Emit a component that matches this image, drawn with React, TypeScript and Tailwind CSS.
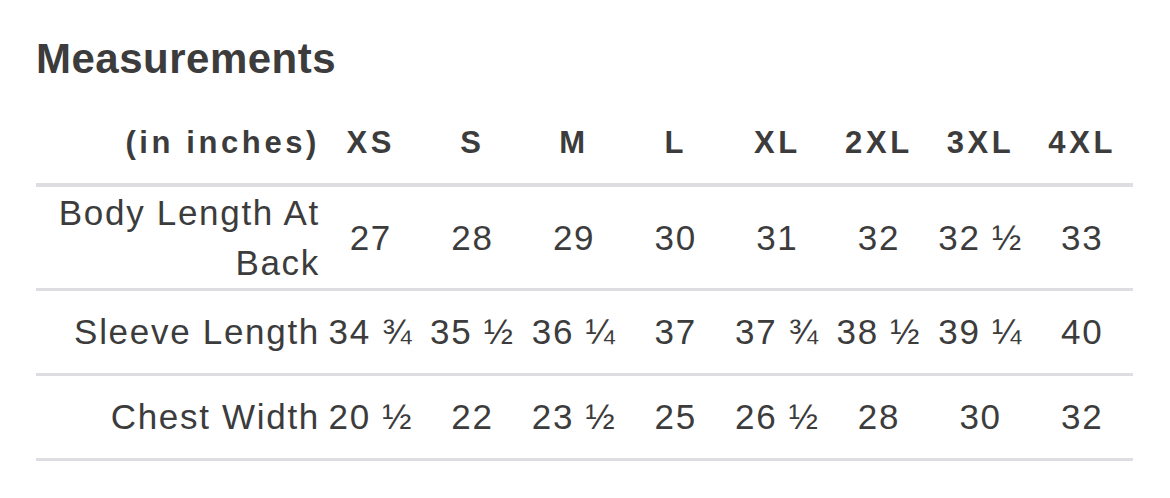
const SIZES = ['XS', 'S', 'M', 'L', 'XL', '2XL', '3XL', '4XL']

const ROWS: { label: string; values: string[] }[] = [
  { label: 'Body Length At Back', values: ['27', '28', '29', '30', '31', '32', '32 ½', '33'] },
  { label: 'Sleeve Length', values: ['34 ¾', '35 ½', '36 ¼', '37', '37 ¾', '38 ½', '39 ¼', '40'] },
  { label: 'Chest Width', values: ['20 ½', '22', '23 ½', '25', '26 ½', '28', '30', '32'] },
]

export default function App() {
  return (
    <div className="min-h-[498px] w-[1170px] bg-white pl-[36px] pt-[34px] text-[#3c3c3c] font-['Liberation_Sans',Arial,sans-serif]">
      <h2 className="text-[42px] font-bold leading-[50px] tracking-[0.5px]">Measurements</h2>

      <div className="mt-[22px] w-[1097px]">
        <div className="grid grid-cols-[284px_repeat(8,1fr)] items-center min-h-[81px] pb-[4px] border-b-4 border-[#dedde2] text-[31px] font-bold leading-[50px] tracking-[3.6px]">
          <div className="text-right">(in inches)</div>
          {SIZES.map((s) => (
            <div key={s} className="text-center">{s}</div>
          ))}
        </div>

        {ROWS.map((row) => (
          <div
            key={row.label}
            className="grid grid-cols-[284px_repeat(8,1fr)] items-center min-h-[85px] py-[0.5px] border-b-[3px] border-[#dedde2] text-[35px] leading-[50px] tracking-[1.7px]"
          >
            <div className="text-right">{row.label}</div>
            {row.values.map((v, i) => (
              <div key={i} className="text-center whitespace-nowrap">{v}</div>
            ))}
          </div>
        ))}
      </div>
    </div>
  )
}
